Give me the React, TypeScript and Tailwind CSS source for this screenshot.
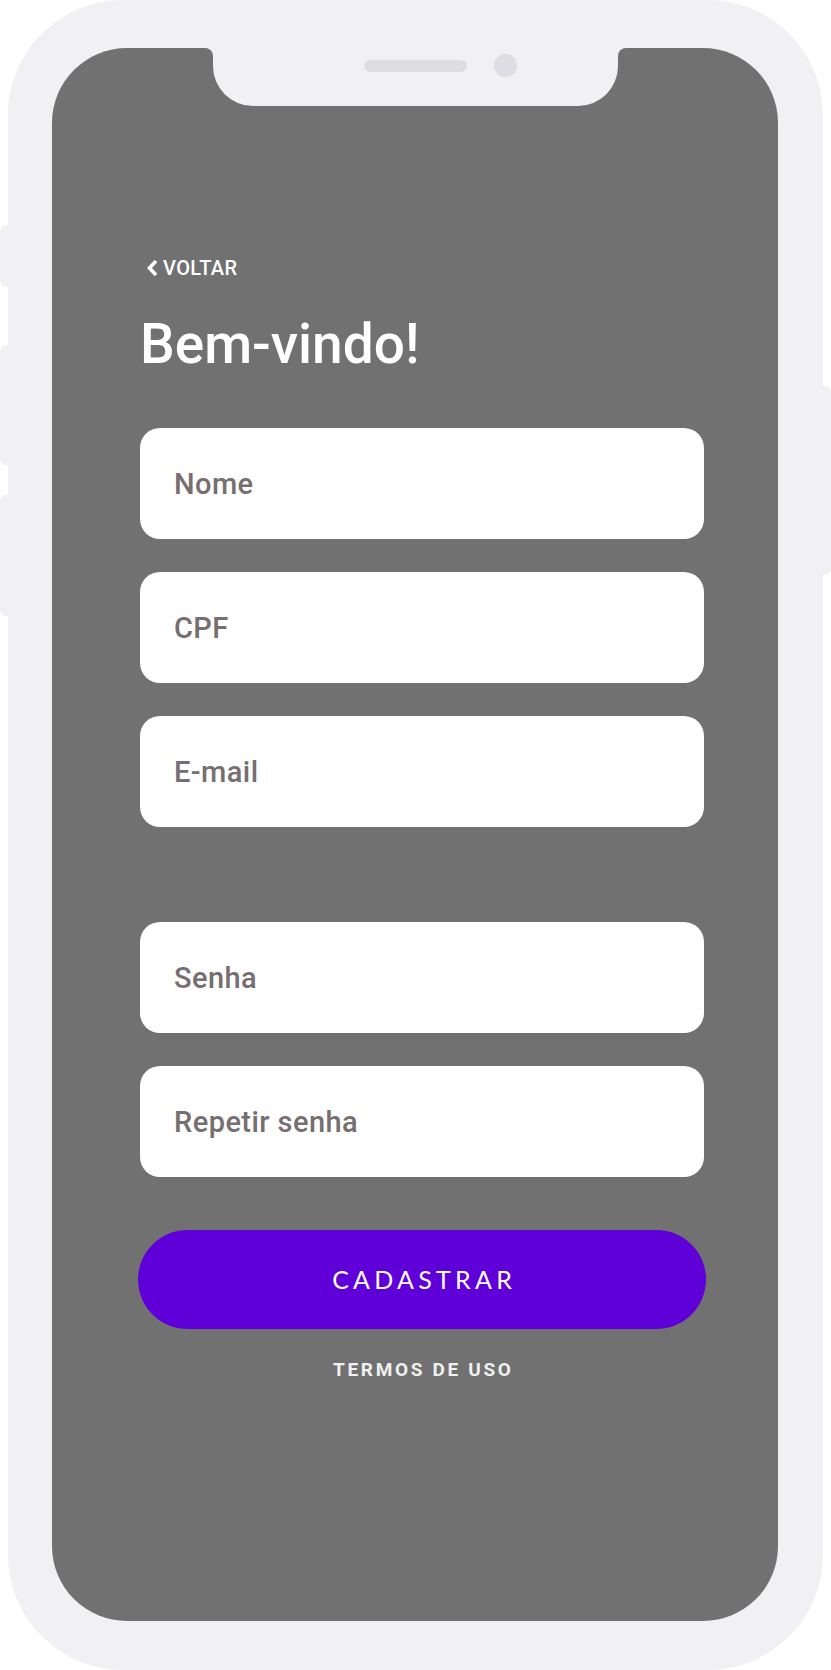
const campos1 = ["Nome", "CPF", "E-mail"];
const campos2 = ["Senha", "Repetir senha"];

const Campo = ({ label }: { label: string }) => (
  <input
    type="text"
    placeholder={label}
    className="h-[111px] w-full rounded-[20px] bg-white pl-[34px] text-[29px] font-medium tracking-[0.015em] text-[#766e70] outline-none placeholder:text-[#766e70]"
  />
);

export default function App() {
  return (
    <div className="relative h-[1670px] w-[831px] bg-white pl-[8px] font-['Roboto',sans-serif]">
      {/* botões laterais */}
      <div className="absolute left-0 top-[225px] h-[62px] w-[12px] rounded-l-[6px] bg-[#f1f1f3]" />
      <div className="absolute left-0 top-[345px] h-[120px] w-[12px] rounded-l-[6px] bg-[#f1f1f3]" />
      <div className="absolute left-0 top-[495px] h-[121px] w-[12px] rounded-l-[6px] bg-[#f1f1f3]" />
      <div className="absolute right-0 top-[386px] h-[189px] w-[12px] rounded-r-[6px] bg-[#f1f1f3]" />

      <div className="relative h-[1670px] w-[815px] rounded-[115px] bg-[#f1f1f3] pb-[49px] pl-[44px] pr-[45px] pt-[48px]">
        <div className="relative flex h-full flex-col rounded-[75px] bg-[#717171] pl-[88px] pr-[74px] pt-[210px]">
          {/* notch */}
          <div className="absolute left-[153px] top-0 h-[8px] w-[8px] bg-[#f1f1f3]">
            <div className="h-full w-full rounded-tr-[8px] bg-[#717171]" />
          </div>
          <div className="absolute left-[566px] top-0 h-[8px] w-[8px] bg-[#f1f1f3]">
            <div className="h-full w-full rounded-tl-[8px] bg-[#717171]" />
          </div>
          <div className="absolute left-[161px] top-0 flex h-[58px] w-[405px] items-start gap-[27px] rounded-b-[40px] bg-[#f1f1f3] pl-[151px] pt-[6px]">
            <div className="mt-[6px] h-[12px] w-[103px] rounded-full bg-[#dedde3]" />
            <div className="h-[23px] w-[23px] rounded-full bg-[#dedde3]" />
          </div>

          <div className="flex items-center gap-[5px] pl-[6px] text-[20px] font-medium leading-none tracking-[0.02em] text-white">
            <svg width="12" height="18" viewBox="0 0 12 18" fill="none">
              <path d="M10 2 L3.5 9 L10 16" stroke="white" strokeWidth="3.6" />
            </svg>
            <span>VOLTAR</span>
          </div>

          <h1 className="mt-[39px] text-[55px] font-medium leading-none text-white">Bem-vindo!</h1>

          <div className="mt-[56px] flex flex-col gap-[33px]">
            {campos1.map((c) => (
              <Campo key={c} label={c} />
            ))}
          </div>

          <div className="mt-[95px] flex flex-col gap-[33px]">
            {campos2.map((c) => (
              <Campo key={c} label={c} />
            ))}
          </div>

          <button className="-mx-[2px] mt-[53px] h-[99px] rounded-full bg-[#5f00d8] pl-[0.17em] font-['Lato',sans-serif] text-[25px] tracking-[0.17em] text-white">
            CADASTRAR
          </button>

          <p className="mt-[31px] pl-[0.14em] text-center text-[19px] font-bold leading-none tracking-[0.14em] text-[#f0f0f0]">
            TERMOS DE USO
          </p>
        </div>
      </div>
    </div>
  );
}
